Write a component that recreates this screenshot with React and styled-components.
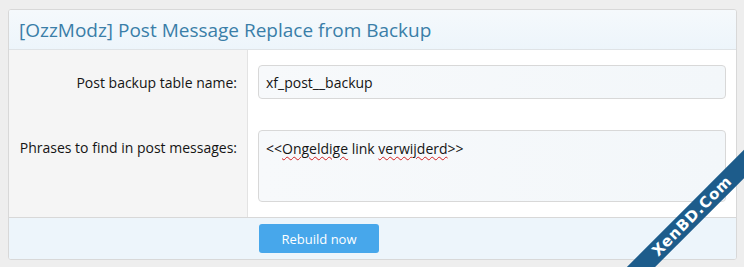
import React from "react"
import styled, { createGlobalStyle } from "styled-components"

const GlobalStyle = createGlobalStyle`
  html, body {
    margin: 0;
    padding: 0;
    background: #eeeeee;
    font-family: "Open Sans", "Noto Sans", sans-serif;
    color: #141414;
  }
`

const Page = styled.div`
  position: relative;
  width: 744px;
  height: 267px;
  overflow: hidden;
  padding: 9px 7px 0 8px;
  box-sizing: border-box;
`

const Block = styled.form`
  border: 1px solid #d8d8d8;
  border-radius: 3px;
  background: #fff;
  overflow: hidden;
  margin: 0;
`

const Header = styled.h2`
  margin: 0;
  height: 39px;
  padding: 0 10px;
  display: flex;
  align-items: center;
  font-size: 19px;
  font-weight: 400;
  color: #3a7ea8;
  background: linear-gradient(to bottom, #f5f9fc, #edf5fb);
  border-bottom: 1px solid #dfe3e6;
`

const Row = styled.div`
  display: grid;
  grid-template-columns: 239px 1fr;
`

const Label = styled.div`
  background: #f5f5f5;
  border-right: 1px solid #e3e3e3;
  text-align: right;
  padding: ${(p) => p.$pad || "0"};
  padding-right: 10px;
  font-size: 14px;
  line-height: 20px;
`

const Field = styled.div`
  padding: ${(p) => p.$pad || "0"};
  padding-left: 10px;
  padding-right: 10px;
`

const Input = styled.div`
  height: 34px;
  box-sizing: border-box;
  border: 1px solid #d8d8d8;
  border-radius: 4px;
  background: linear-gradient(to right, #f7f9fb, #f3f7fa);
  padding: 0 7px;
  display: flex;
  align-items: center;
  font-size: 14px;
`

const TextArea = styled.div`
  height: 72px;
  box-sizing: border-box;
  border: 1px solid #d8d8d8;
  border-radius: 4px;
  background: linear-gradient(to right, #f7f9fb, #f3f7fa);
  padding: 8px 7px 4px;
  font-size: 14px;
  line-height: 20px;
`

const Misspelled = styled.span`
  text-decoration: underline wavy #d02020;
  text-decoration-thickness: 1px;
  text-underline-offset: 2px;
`

const Footer = styled.div`
  border-top: 1px solid #d8d8d8;
  background: #edf5fb;
  padding: 6px 10px 6px 250px;
`

const Button = styled.button`
  width: 120px;
  height: 29px;
  border: none;
  border-radius: 3px;
  background: #47a7eb;
  color: #fff;
  font-family: inherit;
  font-size: 13px;
  padding: 0;
`

/* watermark band lying over the bottom-right corner */
const Ribbon = styled.div`
  position: absolute;
  left: 562px;
  top: 206px;
  width: 260px;
  height: 20px;
  background: #1d5c8b;
  transform: rotate(-45deg);
  transform-origin: center;
  display: flex;
  align-items: center;
  justify-content: center;
  color: #fff;
  font-family: "DejaVu Sans", sans-serif;
  font-weight: 700;
  font-size: 15px;
  line-height: 1;
  letter-spacing: 0.8px;
`

export default function App() {
  return (
    <Page>
      <GlobalStyle />
      <Block onSubmit={(e) => e.preventDefault()}>
        <Header>[OzzModz] Post Message Replace from Backup</Header>
        <Row>
          <Label $pad="23px 0 8px">Post backup table name:</Label>
          <Field $pad="15px 0 8px">
            <Input>xf_post__backup</Input>
          </Field>
        </Row>
        <Row>
          <Label $pad="31px 0 15px">Phrases to find in post messages:</Label>
          <Field $pad="23px 0 15px">
            <TextArea>
              &lt;&lt;<Misspelled>Ongeldige</Misspelled> link{" "}
              <Misspelled>verwijderd</Misspelled>&gt;&gt;
            </TextArea>
          </Field>
        </Row>
        <Footer>
          <Button type="button">Rebuild now</Button>
        </Footer>
      </Block>
      <Ribbon>XenBD.Com</Ribbon>
    </Page>
  )
}
